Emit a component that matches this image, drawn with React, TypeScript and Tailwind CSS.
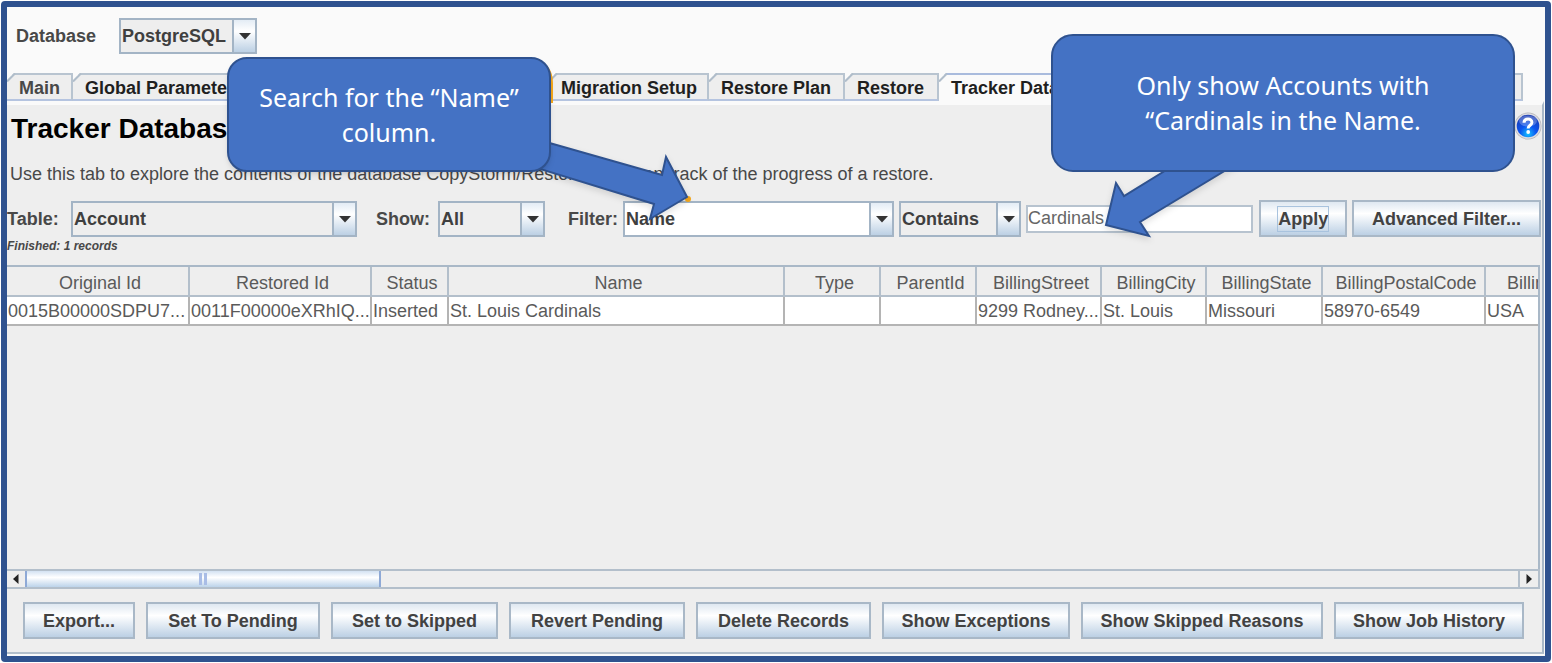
import React, { useState } from 'react';
import clsx from 'clsx';

const tabs = [
  { id: 'main', label: 'Main', width: 'w-[66px]' },
  { id: 'global', label: 'Global Parameters', width: 'w-[184px]' },
  { id: 'objects', label: '', width: 'w-[292px]' },
  { id: 'migration', label: 'Migration Setup', width: 'w-[160px]' },
  { id: 'plan', label: 'Restore Plan', width: 'w-[136px]' },
  { id: 'restore', label: 'Restore', width: 'w-[94px]' },
  { id: 'tracker', label: 'Tracker Database', width: 'w-[180px]' },
  { id: 'log', label: '', width: 'grow' },
];

const columns = [
  { name: 'Original Id', value: '0015B00000SDPU7...', width: 'w-[182px]' },
  { name: 'Restored Id', value: '0011F00000eXRhIQ...', width: 'w-[182px]' },
  { name: 'Status', value: 'Inserted', width: 'w-[77px]' },
  { name: 'Name', value: 'St. Louis Cardinals', width: 'w-[336px]' },
  { name: 'Type', value: '', width: 'w-[96px]' },
  { name: 'ParentId', value: '', width: 'w-[96px]' },
  { name: 'BillingStreet', value: '9299 Rodney...', width: 'w-[125px]' },
  { name: 'BillingCity', value: 'St. Louis', width: 'w-[105px]' },
  { name: 'BillingState', value: 'Missouri', width: 'w-[116px]' },
  { name: 'BillingPostalCode', value: '58970-6549', width: 'w-[163px]' },
  { name: 'BillingCountry', value: 'USA', width: 'w-[150px]' },
];

const actions = [
  { label: 'Export...', width: 'w-[112px]' },
  { label: 'Set To Pending', width: 'w-[174px]' },
  { label: 'Set to Skipped', width: 'w-[167px]' },
  { label: 'Revert Pending', width: 'w-[176px]' },
  { label: 'Delete Records', width: 'w-[175px]' },
  { label: 'Show Exceptions', width: 'w-[188px]' },
  { label: 'Show Skipped Reasons', width: 'w-[242px]' },
  { label: 'Show Job History', width: 'w-[190px]' },
];

type ComboProps = {
  id: string;
  label: string;
  options: string[];
  className?: string;
  editable?: boolean;
};

const Combo: React.FC<ComboProps> = ({ id, label, options, className, editable }) => (
  <div className={clsx('relative h-9 shrink-0 border-2 border-[#a3b4c5]', editable ? 'bg-white' : 'bg-[#eeeeee]', className)}>
    <select
      id={id}
      aria-label={label}
      className="h-full w-full appearance-none bg-transparent pl-px pr-6 text-[18px] leading-6 font-bold text-[#3f3f3f] outline-none"
    >
      {options.map((option) => (
        <option key={option}>{option}</option>
      ))}
    </select>
    <span className="pointer-events-none absolute inset-y-0 right-0 flex w-[23px] items-center justify-center border-l-2 border-[#a3b4c5] bg-linear-to-b from-[#e3ecf5] via-white via-35% to-[#bcd0e4]">
      <svg width="14" height="8" viewBox="0 0 14 8">
        <path d="M1 1h12L7 7.5z" fill="#333333" />
      </svg>
    </span>
  </div>
);

const MetalButton: React.FC<{ label: string; width: string; focused?: boolean }> = ({ label, width, focused }) => (
  <button
    className={clsx(
      'flex h-[37px] shrink-0 items-center justify-center border-2 border-[#a9b8c7] bg-linear-to-b from-[#dfe8f1] via-white via-35% to-[#bcd0e4] text-[18px] leading-6 font-bold whitespace-nowrap text-[#424242]',
      width,
    )}
  >
    <span className={clsx(focused && 'outline-1 outline-[#a9c3de]')}>{label}</span>
  </button>
);

export default function App() {
  const [activeTab, setActiveTab] = useState('tracker');
  const [search, setSearch] = useState('Cardinals');

  return (
    <div className="relative h-screen overflow-hidden bg-white p-px font-['Liberation_Sans',Arial,sans-serif]">
      <div className="flex h-full flex-col overflow-hidden rounded-[4px] border-[6px] border-[#2f528f] bg-[#fafafa]">
        {/* Database selection */}
        <div className="flex h-[66px] shrink-0 items-center gap-[23px] pb-2 pl-[9px]">
          <label htmlFor="database" className="text-[18px] leading-6 font-bold text-[#484848]">Database</label>
          <Combo id="database" label="Database" options={['PostgreSQL', 'MySQL', 'Oracle']} className="w-[138px]" />
        </div>

        {/* Tabs */}
        <div role="tablist" className="flex h-7 shrink-0 pr-[22px]">
          {tabs.map((tab) => {
            const active = tab.id === activeTab;
            return (
              <button
                key={tab.id}
                role="tab"
                aria-selected={active}
                aria-label={tab.label || 'Tab'}
                onClick={() => setActiveTab(tab.id)}
                className={clsx('relative h-7 shrink-0 border-r-2 border-b-2 border-r-[#b8c4d0]', tab.width, active ? 'border-b-[#fafafa]' : 'border-b-[#b5c4e0]')}
              >
                <span
                  className={clsx(
                    'absolute inset-0 border-t-2 pl-3 text-left text-[18px] leading-[27px] font-bold whitespace-nowrap [clip-path:polygon(7px_0,100%_0,100%_100%,0_100%,0_7px)]',
                    active ? 'border-[#a9bbdd] bg-[#fafafa]' : 'border-[#b8c4d0] bg-[#eeeeee]',
                    tab.id === 'main' ? 'text-[#484848]' : 'text-[#1f1f1f]',
                  )}
                >
                  {tab.label}
                </span>
                <svg className="absolute top-0 left-0" width="9" height="9" viewBox="0 0 9 9">
                  <path d="M0 8.5L8 .5" stroke="#b0bdca" strokeWidth="2" />
                </svg>
              </button>
            );
          })}
        </div>

        {/* Tracker panel */}
        <main className="mr-px mb-[2px] flex min-h-0 grow flex-col border-t-4 border-r-2 border-b-2 border-t-[#fafafa] border-r-[#a9b8c7] border-b-[#b3bfcb] bg-[#eeeeee]">
          <div className="flex h-[57px] shrink-0 items-start justify-between pt-2 pl-1">
            <h1 className="text-[28px] leading-8 font-bold text-black">Tracker Database</h1>
            <button aria-label="Help" className="-mt-px h-7 w-7">
              <svg width="28" height="28" viewBox="0 0 28 28">
                <defs>
                  <radialGradient id="helpFill" cx="0.5" cy="0.85" r="0.8">
                    <stop offset="0" stopColor="#16c1ff" />
                    <stop offset="0.45" stopColor="#0a55f0" />
                    <stop offset="1" stopColor="#1a3cb4" />
                  </radialGradient>
                </defs>
                <circle cx="14" cy="14" r="13.5" fill="#b5b5b8" />
                <circle cx="14" cy="14" r="12.8" fill="#dcdce2" />
                <circle cx="14" cy="14" r="11.3" fill="url(#helpFill)" />
                <ellipse cx="14" cy="9" rx="9" ry="5.500" fill="#fff" opacity="0.25" />
                <path d="M10 10.8c.2-5 8-4.800 7.900-.3 0 2.700-3.800 2.900-3.800 6" fill="none" stroke="#fff" strokeWidth="3" />
                <circle cx="14.200" cy="20" r="1.900" fill="#fff" />
              </svg>
            </button>
          </div>
          <p className="h-[38px] shrink-0 pl-[3px] text-[18px] leading-6 whitespace-nowrap text-[#484848]">
            Use this tab to explore the contents of the database CopyStorm/Restore and keep track of the progress of a restore.
          </p>

          {/* Filter row */}
          <div className="flex shrink-0 items-center pr-px text-[18px] leading-6 font-bold text-[#484848]">
            <label htmlFor="table" className="w-16 shrink-0">Table:</label>
            <Combo id="table" label="Table" options={['Account', 'Contact', 'Lead']} className="w-[286px]" />
            <label htmlFor="show" className="ml-[19px] w-[62px] shrink-0">Show:</label>
            <Combo id="show" label="Show" options={['All', 'Pending', 'Skipped']} className="w-[107px]" />
            <label htmlFor="filter" className="ml-[23px] w-[55px] shrink-0">Filter:</label>
            <Combo id="filter" label="Filter" options={['Name', 'Type']} className="w-[271px]" editable />
            <Combo id="operator" label="Operator" options={['Contains', 'Equals']} className="ml-[5px] w-[122px]" />
            <input
              aria-label="Filter value"
              value={search}
              onChange={(e) => setSearch(e.target.value)}
              className="mr-[6px] ml-[5px] h-7 min-w-0 grow border-2 border-[#b7c3cf] bg-white font-normal text-[#666666] outline-none"
            />
            <MetalButton label="Apply" width="w-[88px]" focused />
            <span className="w-[5px]" />
            <MetalButton label="Advanced Filter..." width="w-[189px]" />
          </div>
          <p className="h-7 shrink-0 text-[12px] leading-[18px] font-bold text-[#484848] italic">Finished: 1 records</p>

          {/* Records */}
          <div className="mr-[2px] min-h-0 grow overflow-hidden border-t-2 border-r-2 border-[#a9b8c7]">
            <table className="w-[1628px] table-fixed border-collapse text-[18px] leading-6 text-[#5a5a5a]">
              <thead>
                <tr>
                  {columns.map((column) => (
                    <th key={column.name} className={clsx('h-[29px] border-r-2 border-b-2 border-[#b3bfcb] pt-[3px] pl-[5px] font-normal whitespace-nowrap', column.width)}>
                      {column.name}
                    </th>
                  ))}
                </tr>
              </thead>
              <tbody>
                <tr className="bg-white">
                  {columns.map((column) => (
                    <td key={column.name} className="h-[29px] border-r-2 border-b-2 border-[#b4b4b4] pl-px whitespace-nowrap">
                      {column.value}
                    </td>
                  ))}
                </tr>
              </tbody>
            </table>
          </div>

          {/* Horizontal scrollbar */}
          <div className="mr-[2px] flex h-5 shrink-0 border-y-2 border-r-2 border-[#b3bfcb]">
            <button aria-label="Scroll left" className="flex w-[18px] items-center justify-center">
              <svg width="6" height="10" viewBox="0 0 6 10"><path d="M5.500 0v10L0 5z" fill="#222" /></svg>
            </button>
            <div className="flex w-[356px] items-center justify-center gap-[2px] border-x-2 border-[#8ea9d6] bg-linear-to-b from-[#d3e2f2] via-white via-40% to-[#bcd3ea]">
              <span className="h-3 w-[3px] bg-[#a9bde6]" />
              <span className="h-3 w-[3px] bg-[#a9bde6]" />
            </div>
            <div className="grow border-r-2 border-[#b3bfcb]" />
            <button aria-label="Scroll right" className="flex w-[18px] items-center justify-center">
              <svg width="6" height="10" viewBox="0 0 6 10"><path d="M.500 0v10L6 5z" fill="#222" /></svg>
            </button>
          </div>

          {/* Actions */}
          <div className="flex h-[63px] shrink-0 items-start justify-between pt-[13px] pr-[18px] pl-4">
            {actions.map((action) => (
              <MetalButton key={action.label} label={action.label} width={action.width} />
            ))}
          </div>
        </main>
      </div>

      {/* Callouts */}
      <div className="pointer-events-none absolute top-[57px] left-[227px] h-[115px] w-[324px] font-['Noto_Sans','Open_Sans',sans-serif] text-[25px] leading-[35px] text-white">
        <svg className="absolute top-0 left-0 overflow-visible" width="324" height="115">
          <path d="M308 3Q325 8 325 26V46" fill="none" stroke="#f5a81c" strokeWidth="2" />
          <circle cx="461" cy="142" r="3" fill="#f5a81c" />
          <path
            className="drop-shadow-md"
            d="M312 83L435 118 439 100 460 140 423 162 427 147 300 108z"
            fill="#4472c4"
            stroke="#2f528f"
            strokeWidth="2"
          />
        </svg>
        <div className="absolute inset-0 flex items-center justify-center rounded-[20px] border-2 border-[#2f528f] bg-[#4472c4] text-center shadow-md">
          <p>Search for the “Name”<br />column.</p>
        </div>
      </div>
      <div className="pointer-events-none absolute top-[34px] right-[37px] h-[138px] w-[464px] font-['Noto_Sans','Open_Sans',sans-serif] text-[25px] leading-[35px] text-white">
        <svg className="absolute top-0 left-0 overflow-visible" width="464" height="138">
          <path className="drop-shadow-md" d="M125 130L73 162 65 149 55 191 98 202 89 188 185 130z" fill="#4472c4" stroke="#2f528f" strokeWidth="2" />
        </svg>
        <div className="absolute inset-0 flex items-center justify-center rounded-[22px] border-2 border-[#2f528f] bg-[#4472c4] text-center">
          <p>Only show Accounts with<br />“Cardinals in the Name.</p>
        </div>
      </div>
    </div>
  );
}
